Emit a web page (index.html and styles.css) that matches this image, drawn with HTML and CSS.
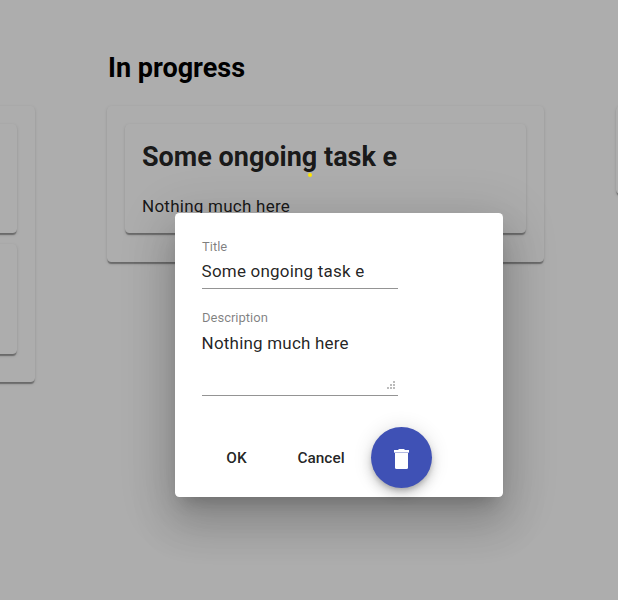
FILE: index.html
```html
<!DOCTYPE html>
<html lang="en">
<head>
<meta charset="utf-8">
<title>Board</title>
<link rel="stylesheet" href="styles.css">
</head>
<body>
<main class="board">
  <section class="column">
    <h2 class="column-title">&nbsp;</h2>
    <div class="card list">
      <article class="card task"></article>
      <article class="card task"></article>
    </div>
  </section>
  <section class="column">
    <h2 class="column-title">In progress</h2>
    <div class="card list">
      <article class="card task">
        <h2 class="task-title">Some ongoing task e</h2>
        <p class="task-text">Nothing much here</p>
      </article>
    </div>
  </section>
  <section class="column">
    <h2 class="column-title">&nbsp;</h2>
    <div class="card list empty"></div>
  </section>
</main>
<div class="backdrop"></div>
<span class="marker"></span>
<div class="dialog">
  <div class="field">
    <span class="label">Title</span>
    <div class="value">Some ongoing task e</div>
  </div>
  <div class="field area">
    <span class="label">Description</span>
    <div class="value">Nothing much here</div>
    <svg class="grip" width="8" height="8" viewBox="0 0 8 8" shape-rendering="crispEdges" fill="#bcbcbc">
      <path d="M6 0h2v2H6zM3 3h2v2H3zM6 3h2v2H6zM0 6h2v2H0zM3 6h2v2H3zM6 6h2v2H6z"/>
    </svg>
  </div>
  <div class="actions">
    <span class="button ok">OK</span>
    <span class="button cancel">Cancel</span>
    <span class="fab">
      <svg width="61" height="61" viewBox="0 0 61 61" fill="#fff">
        <path d="M23 23h4l1-1h5l1 1h4v2H23z"/>
        <path d="M23 25h15v1H23z" opacity=".6"/>
        <path d="M24 26h13v14.500a1.500 1.500 0 0 1-1.500 1.500h-10a1.500 1.500 0 0 1-1.500-1.500z"/>
      </svg>
    </span>
  </div>
</div>
</body>
</html>
```
FILE: styles.css
```css
* { box-sizing: border-box; }
html, body { height: 100%; overflow: hidden; }
body {
  margin: 0;
  background: #fff;
  color: #000;
  font-family: Roboto, sans-serif;
}
h2, p { margin: 0; }
.board {
  display: flex;
  align-items: flex-start;
  gap: 72px;
  height: 100%;
  margin-left: -402px;
  padding-top: 49.700px;
  overflow: hidden;
}
.column { flex: 0 0 437px; }
.column-title {
  height: 56px;
  padding-left: 1px;
  font-size: 27px;
  line-height: 37px;
  font-weight: 700;
}
.card {
  border-radius: 4.4px;
  background: #fff;
  box-shadow: 0 2.2px 1.1px -1.1px rgba(0,0,0,.2), 0 1.1px 1.1px 0 rgba(0,0,0,.14), 0 1.1px 3.3px 0 rgba(0,0,0,.12);
}
.list {
  display: flex;
  flex-direction: column;
  gap: 10.6px;
  padding: 18px 17.600px 28.4px 18px;
}
.empty { height: 88px; }
.task {
  height: 109.700px;
  padding: 16.5px 17px;
  color: rgba(0,0,0,.87);
}
.task-title {
  font-size: 27px;
  line-height: 34px;
  font-weight: 700;
}
.task-text {
  margin-top: 19px;
  font-size: 17px;
  letter-spacing: .25px;
  line-height: 26px;
}
.backdrop {
  position: absolute;
  inset: 0;
  background: rgba(0,0,0,.32);
}
.marker {
  position: absolute;
  left: 308px;
  top: 173px;
  width: 4px;
  height: 4px;
  border-radius: 50%;
  background: #ffe600;
}
.dialog {
  position: absolute;
  left: 175px;
  top: 213px;
  width: 328px;
  height: 284px;
  padding: 26px 27px;
  border-radius: 4.4px;
  background: #fff;
  color: rgba(0,0,0,.87);
  box-shadow: 0 12px 16.5px -7.7px rgba(0,0,0,.2), 0 26.4px 41.800px 3.3px rgba(0,0,0,.14), 0 9.900px 50.600px 8.800px rgba(0,0,0,.12);
}
.field {
  position: relative;
  width: 196px;
  height: 50px;
  border-bottom: 1px solid #949494;
}
.label {
  display: block;
  color: rgba(0,0,0,.5);
  font-size: 13px;
  line-height: 15px;
}
.value {
  margin-top: 7px;
  margin-left: -.4px;
  font-size: 17px;
  letter-spacing: .2px;
  line-height: 20px;
}
.area { height: 86px; margin-top: 21px; }
.area .value { margin-top: 8px; }
.grip { position: absolute; right: 3px; bottom: 6px; }
.actions {
  display: flex;
  align-items: center;
  height: 61px;
  margin-top: 31px;
}
.button {
  font-size: 15.4px;
  font-weight: 500;
  line-height: 40px;
  text-align: center;
}
.ok { width: 69px; }
.cancel { width: 100px; }
.fab {
  width: 61px;
  height: 61px;
  border-radius: 50%;
  background: #3f51b5;
  box-shadow: 0 3.3px 5.5px -1px rgba(0,0,0,.2), 0 6.600px 11px 0 rgba(0,0,0,.14), 0 1px 19.800px 0 rgba(0,0,0,.12);
}
.fab svg { display: block; }
```
